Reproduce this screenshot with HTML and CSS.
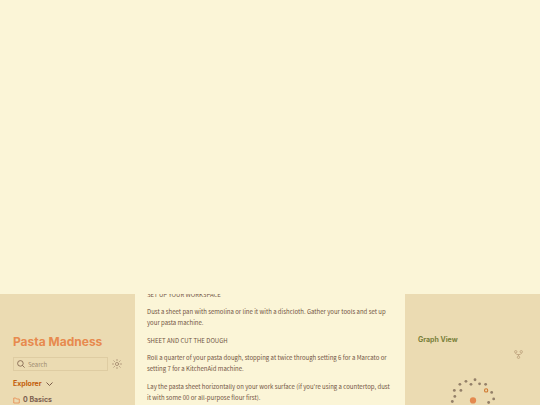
FILE: index.html
```
<!DOCTYPE html>
<html lang="en">
<head>
  <meta charset="UTF-8">
  <meta name="viewport" content="width=device-width, initial-scale=1">
  <title>Pasta Madness</title>
  <link rel="stylesheet" href="styles.css">
</head>
<body>

  <div class="spacer"></div>

  <div class="page">
    <!-- Left sidebar -->
    <aside class="sidebar left">
      <h1 class="site-title">Pasta Madness</h1>
      <div class="toolbar">
        <div class="search">
          <svg class="search-icon" viewBox="0 0 20 20" fill="none" stroke="#7a5c48" stroke-width="2">
            <circle cx="8.5" cy="8.5" r="7"/>
            <path d="M13.5 13.5L19 19"/>
          </svg>
          <input type="text" placeholder="Search" aria-label="Search">
        </div>
        <button class="theme-toggle" aria-label="Toggle theme">
          <svg viewBox="0 0 20 20" fill="none" stroke="#9d8268" stroke-width="1.5" stroke-linecap="round">
            <circle cx="10" cy="10" r="3.2"/>
            <path d="M10 1v2M10 17v2M1 10h2M17 10h2M3.6 3.6l1.4 1.4M15 15l1.4 1.4M3.6 16.4L5 15M15 5l1.4-1.4"/>
          </svg>
        </button>
      </div>
      <button class="explorer-toggle">
        <span>Explorer</span>
        <svg viewBox="0 0 14 14" fill="none" stroke="#7a5c48" stroke-width="2">
          <path d="M1 3l6 6 6-6"/>
        </svg>
      </button>
      <a class="folder" href="#basics">
        <svg viewBox="0 0 14 14" fill="none" stroke="#e78a4e" stroke-width="1.6" stroke-linejoin="round">
          <path d="M1.5 12V2h4l1.5 2h5.5v8z"/>
        </svg>
        <span>0 Basics</span>
      </a>
    </aside>

    <main class="article">
      <h2>SET UP YOUR WORKSPACE</h2>
      <p>Dust a sheet pan with semolina or line it with a dishcloth. Gather your tools and set up your pasta machine.</p>
      <h2>SHEET AND CUT THE DOUGH</h2>
      <p>Roll a quarter of your pasta dough, stopping at twice through setting 6 for a Marcato or setting 7 for a KitchenAid machine.</p>
      <p>Lay the pasta sheet horizontally on your work surface (if you’re using a countertop, dust it with some 00 or all-purpose flour first).</p>
    </main>

    <!-- Right sidebar -->
    <aside class="sidebar right">
      <h3 class="graph-title">Graph View</h3>
      <div class="graph">
        <button class="graph-expand" aria-label="Open global graph">
          <svg viewBox="0 0 18 18" fill="none" stroke="#c0a57f" stroke-width="1.8">
            <circle cx="3.5" cy="3.5" r="2.4"/>
            <circle cx="14.5" cy="3.5" r="2.4"/>
            <circle cx="9" cy="14.5" r="2.4"/>
            <path d="M3.5 6v1l2 2h7l2-2V6M9 9v3"/>
          </svg>
        </button>
        <svg class="nodes" viewBox="0 0 108 60">
          <g fill="#948069">
            <circle cx="34" cy="53" r="1.4"/>
            <circle cx="36.5" cy="48" r="1.4"/>
            <circle cx="36" cy="42" r="1.4"/>
            <circle cx="42.5" cy="42" r="1.4"/>
            <circle cx="41.5" cy="36" r="1.4"/>
            <circle cx="47.5" cy="33" r="1.4"/>
            <circle cx="52.5" cy="36" r="1.4"/>
            <circle cx="56.5" cy="31.5" r="1.4"/>
            <circle cx="61" cy="35.5" r="1.4"/>
            <circle cx="67" cy="36" r="1.4"/>
            <circle cx="73" cy="44" r="1.4"/>
            <circle cx="75" cy="50.5" r="1.4"/>
            <circle cx="70" cy="54" r="1.4"/>
          </g>
          <circle cx="67.5" cy="42" r="1.6" fill="#ead9ac" stroke="#d17a33" stroke-width="1.1"/>
          <circle cx="54.5" cy="52" r="3.1" fill="#e48a50"/>
        </svg>
      </div>
    </aside>
  </div>

</body>
</html>
```
FILE: styles.css
```
* {
  box-sizing: border-box;
}

body {
  margin: 0;
  height: 100vh;
  display: flex;
  flex-direction: column;
  overflow: hidden;
  background: #fbf5d7;
  color: #725443;
  font-family: "Noto Sans CJK JP", sans-serif;
  font-size: 6px;
  line-height: 11px;
}

h1, h2, h3, p {
  margin: 0;
}

button {
  padding: 0;
  border: none;
  background: none;
}

svg {
  display: block;
}

.spacer {
  flex: 0 0 294px;
}

.page {
  flex: 1;
  min-height: 0;
  display: grid;
  grid-template-columns: 1fr 2fr 1fr;
}

.sidebar {
  min-width: 0;
  background: #ebdbb2;
  overflow: hidden;
}

.left {
  padding: 40px 13px 0;
}

.site-title {
  color: #e78a4e;
  font-family: Inter, sans-serif;
  font-size: 12px;
  font-weight: 700;
  line-height: 16px;
  white-space: nowrap;
}

.toolbar {
  display: flex;
  align-items: center;
  gap: 4px;
  margin-top: 7px;
}

.search {
  flex: 1;
  min-width: 0;
  height: 14px;
  display: flex;
  align-items: center;
  gap: 3px;
  padding: 0 3px;
  border: 1px solid #decca2;
}

.search-icon {
  flex: none;
  width: 8px;
  height: 8px;
}

.search input {
  flex: 1;
  min-width: 0;
  padding: 0;
  border: none;
  outline: none;
  background: none;
  color: #7c6050;
  font-family: "Noto Sans CJK JP", sans-serif;
  font-size: 6px;
  line-height: 11px;
}

.search input::placeholder {
  color: #a08a70;
}

.theme-toggle svg {
  width: 10px;
  height: 10px;
}

.explorer-toggle {
  display: flex;
  align-items: center;
  gap: 4px;
  margin-top: 7px;
  color: #c35e0a;
  font-family: Inter, sans-serif;
  font-size: 7px;
  font-weight: 700;
  line-height: 12px;
}

.explorer-toggle svg {
  width: 7px;
  height: 7px;
}

.folder {
  display: flex;
  align-items: center;
  gap: 3px;
  margin-top: 4px;
  color: #7c6050;
  font-family: Inter, sans-serif;
  font-size: 7px;
  font-weight: 700;
  line-height: 12px;
  text-decoration: none;
}

.folder svg {
  width: 7px;
  height: 7px;
}

/* Scrolled to the end, so the top line is cut off */
.article {
  min-width: 0;
  display: flex;
  flex-direction: column;
  justify-content: flex-end;
  padding: 0 12px 2px;
  overflow: hidden;
}

.article h2 {
  margin-bottom: 6px;
  font-size: 6px;
  font-weight: 400;
}

.article p {
  margin-bottom: 7px;
}

.article p:last-child {
  margin-bottom: 0;
}

.right {
  padding: 40px 13px 0;
}

.graph-title {
  color: #79803a;
  font-family: Inter, sans-serif;
  font-size: 7px;
  font-weight: 700;
  line-height: 12px;
}

.graph {
  position: relative;
  margin-top: 2px;
}

.graph-expand {
  position: absolute;
  top: 2px;
  right: 4px;
}

.graph-expand svg {
  width: 9px;
  height: 9px;
}

.nodes {
  width: 100%;
}
```
